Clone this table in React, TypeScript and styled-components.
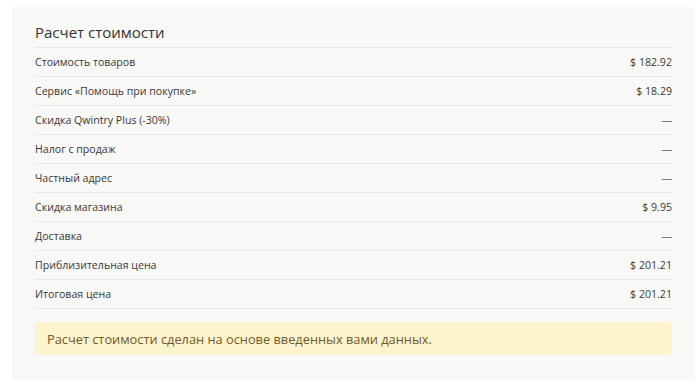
import styled, { createGlobalStyle } from "styled-components";

const GlobalStyle = createGlobalStyle`
  body {
    margin: 0;
    background: #ffffff;
    font-family: "Open Sans", "Noto Sans", sans-serif;
  }
`;

const Page = styled.div`
  padding: 7px 6px 8px 12px;
`;

const Panel = styled.section`
  background: #f8f8f7;
  border-radius: 3px;
  padding: 11px 22px 26px 23px;
  height: 373px;
  box-sizing: border-box;
`;

const Title = styled.h2`
  margin: 0;
  font-size: 15px;
  font-weight: 400;
  color: #333333;
  line-height: 29px;
  border-bottom: 1px solid #e4e6ea;
`;

const List = styled.div`
  display: flex;
  flex-direction: column;
`;

const Row = styled.div`
  display: flex;
  justify-content: space-between;
  align-items: center;
  height: 28px;
  border-bottom: 1px solid #e4e6ea;
  font-size: 10.6px;
  color: #383838;
`;

const Value = styled.span<{ $empty?: boolean }>`
  color: ${(p) => (p.$empty ? "#777777" : "#383838")};
`;

const Note = styled.div`
  margin-top: 13px;
  background: #fff3cd;
  border-radius: 3px;
  height: 33px;
  display: flex;
  align-items: center;
  padding: 0 12px;
  font-size: 12.8px;
  color: #6d5b2a;
`;

const rows: [string, string | null][] = [
  ["Стоимость товаров", "$ 182.92"],
  ["Сервис «Помощь при покупке»", "$ 18.29"],
  ["Скидка Qwintry Plus (-30%)", null],
  ["Налог с продаж", null],
  ["Частный адрес", null],
  ["Скидка магазина", "$ 9.95"],
  ["Доставка", null],
  ["Приблизительная цена", "$ 201.21"],
  ["Итоговая цена", "$ 201.21"],
];

const App = () => (
  <>
    <GlobalStyle />
    <Page>
      <Panel>
        <Title>Расчет стоимости</Title>
        <List>
          {rows.map(([label, value]) => (
            <Row key={label}>
              <span>{label}</span>
              <Value $empty={!value}>{value ?? "—"}</Value>
            </Row>
          ))}
        </List>
        <Note>Расчет стоимости сделан на основе введенных вами данных.</Note>
      </Panel>
    </Page>
  </>
);

export default App;
